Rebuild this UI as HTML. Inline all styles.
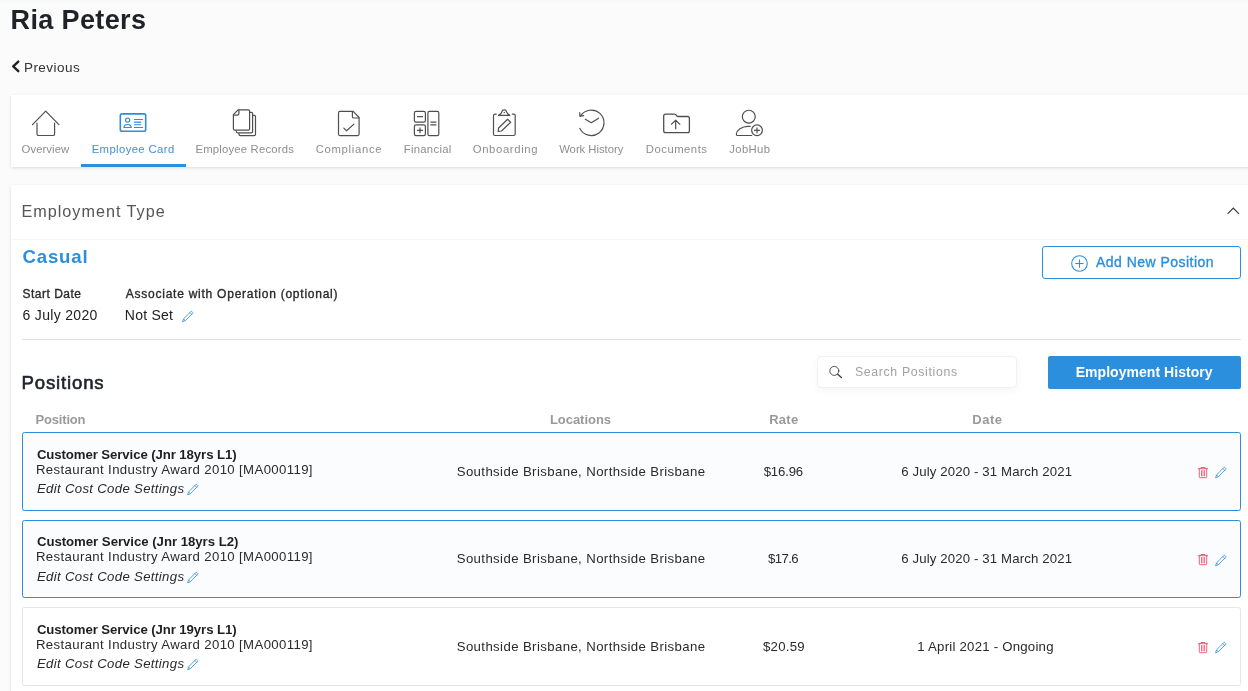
<!DOCTYPE html>
<html lang="en"><head><meta charset="utf-8"><title>Ria Peters - Employee Card</title>
<style>
*{box-sizing:border-box;margin:0;padding:0}
html,body{width:1248px;height:691px;overflow:hidden;background:#fbfbfb;font-family:"Liberation Sans", sans-serif;color:#222}
body{position:relative}
#app{position:absolute;left:0;top:0;width:1248px;height:691px;will-change:transform}
.t{position:absolute;white-space:nowrap;line-height:1;display:block}
.m{-webkit-text-stroke:0.35px currentColor}
.m2{-webkit-text-stroke:0.6px currentColor}
.topshade{position:absolute;left:0;top:0;width:1248px;height:4px;background:linear-gradient(#f6f7f7,#fbfbfb)}
.card{position:absolute;background:#fff;box-shadow:0 1px 3px rgba(0,0,0,.13)}
#tabs{left:11px;top:95px;width:1245px;height:72px}
#panel{left:11px;top:185px;width:1245px;height:520px}
.abs{position:absolute}
.uline{position:absolute;left:81px;top:164px;width:105px;height:3px;background:#2c8fdd}
.hr1{position:absolute;left:11px;top:239px;width:1237px;height:1px;background:#f6f6f6}
.hr2{position:absolute;left:22px;top:339px;width:1219px;height:1px;background:#dee2e4}
.btn-o{position:absolute;left:1042px;top:246px;width:199px;height:33px;border:1px solid #2c8fdd;border-radius:3px;background:#fff}
.btn-p{position:absolute;left:1048px;top:356px;width:193px;height:33px;border-radius:2px;background:#2c8fdd}
.search{position:absolute;left:817px;top:356px;width:200px;height:32px;border:1px solid #eff1f3;border-radius:4px;background:#fff;box-shadow:0 3px 8px rgba(0,0,0,.04)}
.row{position:absolute;left:22px;width:1219px;height:78px;border:1px solid #2c8fdd;border-radius:2.5px;background:#fafcfe}
.row.plain{border-color:#e6e6e6;background:#fff}
svg{position:absolute;overflow:visible}
.ic{fill:none;stroke:#4f4f4f;stroke-width:1.2;stroke-linecap:round;stroke-linejoin:round}
.icb{fill:none;stroke:#2c8fdd;stroke-width:1.3;stroke-linecap:round;stroke-linejoin:round}
</style></head>
<body>
<div id="app">
<div class="topshade"></div>
<header>
<span id="h1" class="t" style="font-size:27px;color:#1f2328;font-weight:700;left:10.50px;top:7.00px;letter-spacing:0.383px">Ria Peters</span>
<svg style="left:10px;top:59px" width="12" height="15" viewBox="10 59 12 15"><path d="M18.3 61.6 L13.2 66.4 L18.3 71.2" fill="none" stroke="#1f2328" stroke-width="2.4" stroke-linecap="round" stroke-linejoin="round"/></svg>
<span id="prev" class="t" style="font-size:13.5px;color:#333;left:23.90px;top:61.00px;letter-spacing:0.490px">Previous</span>
</header>
<nav>
<div id="tabs" class="card"></div>
<a class="tab"><svg style="left:30px;top:108px" width="32" height="30" viewBox="30 108 32 30"><g class="ic" stroke-linecap="butt"><path d="M32.5 124.7 L45.7 111.1 L58.9 124.7"/><path d="M37 123.2 V133.9 Q37 135.5 38.6 135.5 H53 Q54.6 135.5 54.6 133.9 V123.2"/></g></svg><span id="tb1" class="t" style="font-size:11.3px;color:#8e8e8e;left:21.60px;top:144.00px;letter-spacing:0.068px">Overview</span></a>
<a class="tab active"><svg style="left:117px;top:110px" width="32" height="26" viewBox="117 110 32 26"><g class="icb"><rect x="120.3" y="113.9" width="25.4" height="17.3" rx="1.8" stroke-width="1.6"/><circle cx="127.6" cy="120.1" r="2.1" stroke-width="1.2"/><path d="M123.9 127.5 C124.3 123.5 130.9 123.5 131.3 127.5 Z" stroke-width="1.1"/><path d="M134.4 119.5 H142.6 M134.4 122.1 H140.8 M134.4 124.8 H140.8 M134.4 127.5 H142.6" stroke-width="1.1"/></g></svg><span id="tb2" class="t" style="font-size:11.3px;color:#3b90df;left:91.70px;top:144.00px;letter-spacing:0.385px">Employee Card</span></a>
<a class="tab"><svg style="left:230px;top:107px" width="30" height="32" viewBox="230 107 30 32"><g class="ic"><path d="M233.4 114.6 L238.1 109.9 H248.3 Q249.6 109.9 249.6 111.2 V128.8 Q249.6 130.1 248.3 130.1 H234.7 Q233.4 130.1 233.4 128.8 Z"/><path d="M238.9 110.3 V113.6 Q238.9 115.2 237.3 115.2 H233.8"/><path d="M250 112.4 H251.3 Q252.6 112.4 252.6 113.7 V131.6 Q252.6 132.9 251.3 132.9 H237.6 Q236.3 132.9 236.2 131"/><path d="M253 115.3 H254.2 Q255.5 115.3 255.5 116.6 V134.3 Q255.5 135.6 254.2 135.6 H240.3 Q239 135.6 238.9 133.6"/></g></svg><span id="tb3" class="t" style="font-size:11.3px;color:#8e8e8e;left:195.50px;top:144.00px;letter-spacing:0.194px">Employee Records</span></a>
<a class="tab"><svg style="left:335px;top:108px" width="28" height="30" viewBox="335 108 28 30"><g class="ic"><path d="M353.2 111.4 H340 Q338.5 111.4 338.5 112.9 V134.1 Q338.5 135.6 340 135.6 H357.6 Q359.1 135.6 359.1 134.1 V117.5 Z"/><path d="M352.4 111.8 V116.4 Q352.4 118 354 118 H358.8"/><path d="M343.8 128.1 L346.6 130.8 L353.9 124.1"/></g></svg><span id="tb4" class="t" style="font-size:11.3px;color:#8e8e8e;left:315.70px;top:144.00px;letter-spacing:0.692px">Compliance</span></a>
<a class="tab"><svg style="left:411px;top:108px" width="31" height="30" viewBox="411 108 31 30"><g class="ic"><rect x="414.4" y="111.4" width="11" height="10.8" rx="1.6"/><rect x="414.4" y="124.8" width="11" height="10.8" rx="1.6"/><rect x="427.9" y="111.4" width="10.9" height="24.2" rx="1.6"/><path d="M417 116.6 H423 M417 130.4 H423 M420 127.4 V133.3 M430.4 122.2 H436.4 M430.4 124.8 H436.4" stroke-linecap="butt"/></g></svg><span id="tb5" class="t" style="font-size:11.3px;color:#8e8e8e;left:403.70px;top:144.00px;letter-spacing:0.300px">Financial</span></a>
<a class="tab"><svg style="left:490px;top:107px" width="29" height="31" viewBox="490 107 29 31"><g class="ic"><path d="M496.3 114.1 H495 Q493.5 114.1 493.5 115.6 V134 Q493.5 135.5 495 135.5 H513.7 Q515.2 135.5 515.2 134 V115.6 Q515.2 114.1 513.7 114.1 H512.3"/><path d="M498.6 115.3 H509.8 Q506.9 113.4 506.6 111.8 C506.2 109.2 502.2 109.2 501.8 111.8 Q501.5 113.4 498.6 115.3 Z"/><path d="M498.1 131.5 L498.6 128 L507.6 119.3 L510.7 122.2 L501.5 131 Z"/><circle cx="504.2" cy="112.5" r="0.35" stroke-width="0.7"/></g></svg><span id="tb6" class="t" style="font-size:11.3px;color:#8e8e8e;left:472.80px;top:144.00px;letter-spacing:0.627px">Onboarding</span></a>
<a class="tab"><svg style="left:576px;top:106px" width="32" height="33" viewBox="576 106 32 33"><g class="ic"><path d="M580.47 116.16 A12.7 12.7 0 1 1 579.9 128.4"/><path d="M579.7 112.3 L579.9 116.2 L584.1 115.6" stroke-linecap="butt"/><path d="M584.9 119.1 L591.3 122.7 L599 118" stroke-linecap="butt"/></g></svg><span id="tb7" class="t" style="font-size:11.3px;color:#8e8e8e;left:559.20px;top:144.00px;letter-spacing:-0.026px">Work History</span></a>
<a class="tab"><svg style="left:660px;top:110px" width="33" height="26" viewBox="660 110 33 26"><g class="ic"><path d="M663.7 116 Q663.7 114.1 665.6 114.1 H674.6 Q675.8 114.1 676.3 115.3 Q676.8 116.5 678 116.5 H687.5 Q689.4 116.5 689.4 118.4 V130.7 Q689.4 132.6 687.5 132.6 H665.6 Q663.7 132.6 663.7 130.7 Z" stroke-width="1.3"/><path d="M675.7 120.4 V129.3 M671.1 124.6 L675.7 120.2 L680.2 124.6" stroke-linecap="butt"/></g></svg><span id="tb8" class="t" style="font-size:11.3px;color:#8e8e8e;left:645.80px;top:144.00px;letter-spacing:0.502px">Documents</span></a>
<a class="tab"><svg style="left:733px;top:106px" width="33" height="33" viewBox="733 106 33 33"><g class="ic"><circle cx="748.8" cy="116.7" r="6.45"/><path d="M750.2 126.3 H748.2 C741.5 126.3 736.7 130.2 736.4 134 Q736.3 135.5 737.8 135.5 H751.7"/><circle cx="757" cy="130.3" r="5.35"/><path d="M754 130.3 H759.9 M757 127.4 V133.2" stroke-linecap="butt"/></g></svg><span id="tb9" class="t" style="font-size:11.3px;color:#8e8e8e;left:729.20px;top:144.00px;letter-spacing:0.389px">JobHub</span></a>
<div class="uline"></div>
</nav>
<main>
<div id="panel" class="card"></div>
<section class="emp-type">
<span id="et" class="t" style="font-size:16.2px;color:#555;left:21.50px;top:203.00px;letter-spacing:0.996px">Employment Type</span>
<svg style="left:1226px;top:206px" width="14" height="10" viewBox="1226 206 14 10"><path d="M1227.6 213.8 L1233.3 208.1 L1239 213.8" fill="none" stroke="#3a3a3a" stroke-width="1.2"/></svg>
<div class="hr1"></div>
<span id="cas" class="t" style="font-size:18.6px;color:#2c8fdd;font-weight:700;left:22.50px;top:248.00px;letter-spacing:0.838px">Casual</span>
<div class="btn-o"></div>
<svg style="left:1070.5px;top:254.8px" width="17" height="17" viewBox="0 0 17 17"><g fill="none" stroke="#2c8fdd" stroke-width="1.1" stroke-linecap="round"><circle cx="8.5" cy="8.5" r="7.8"/><path d="M8.5 4.8 V12.2 M4.8 8.5 H12.2"/></g></svg>
<span id="anp" class="t m" style="font-size:14px;color:#2c8fdd;left:1096.00px;top:255.00px;letter-spacing:0.472px">Add New Position</span>
<span id="sdl" class="t m" style="font-size:12px;color:#2a2a2a;left:22.50px;top:288.00px;letter-spacing:0.494px">Start Date</span>
<span id="sdv" class="t" style="font-size:14px;color:#222;left:22.50px;top:308.00px;letter-spacing:0.318px">6 July 2020</span>
<span id="aol" class="t m" style="font-size:12px;color:#2a2a2a;left:125.80px;top:288.00px;letter-spacing:0.753px">Associate with Operation (optional)</span>
<span id="aov" class="t" style="font-size:14px;color:#222;left:124.80px;top:308.00px;letter-spacing:0.233px">Not Set</span>
<svg style="left:181.9px;top:310.5px" width="12" height="12" viewBox="0 0 12 12"><g fill="none" stroke="#3a93e0" stroke-width="0.85" stroke-linecap="round" stroke-linejoin="round"><path d="M9.0 0.5 Q9.5 0.1 10 0.6 L10.7 1.3 Q11.1 1.8 10.7 2.3 L3.3 9.7 L0.5 10.8 L1.6 8 Z"/><path d="M8 1.6 L9.7 3.3"/><path d="M1.7 8.1 L3.2 9.6"/></g></svg>
</section>
<div class="hr2"></div>
<section class="positions">
<span id="pos" class="t m2" style="font-size:18.6px;color:#20242a;left:21.50px;top:374.00px;letter-spacing:0.831px">Positions</span>
<div class="search"></div>
<svg style="left:828px;top:364px" width="16" height="16" viewBox="828 364 16 16"><g fill="none" stroke="#3d3d3d" stroke-linecap="round"><circle cx="834.35" cy="370.9" r="4.5" stroke-width="0.9"/><path d="M837.7 374.3 L841.4 377.5" stroke-width="1.3"/></g></svg>
<span id="sp" class="t" style="font-size:12.3px;color:#a2a2a2;left:854.90px;top:366.00px;letter-spacing:0.658px">Search Positions</span>
<div class="btn-p"></div>
<span id="eh" class="t" style="font-size:14px;color:#fff;font-weight:700;left:1075.70px;top:365.00px;letter-spacing:0.044px">Employment History</span>
<span id="hp" class="t" style="font-size:13px;color:#9a9a9a;font-weight:700;left:35.60px;top:413.00px;letter-spacing:-0.191px">Position</span>
<span id="hl" class="t" style="font-size:13px;color:#9a9a9a;font-weight:700;left:549.90px;top:413.00px;letter-spacing:-0.033px">Locations</span>
<span id="hr" class="t" style="font-size:13px;color:#9a9a9a;font-weight:700;left:769.20px;top:413.00px;letter-spacing:0.284px">Rate</span>
<span id="hdt" class="t" style="font-size:13px;color:#9a9a9a;font-weight:700;left:972.30px;top:413.00px;letter-spacing:0.484px">Date</span>
<div class="position-item"><div class="row" style="top:432px;height:79px"></div><span id="r1a" class="t" style="font-size:13.2px;color:#1f1f1f;font-weight:700;left:36.90px;top:448.00px;letter-spacing:-0.087px">Customer Service (Jnr 18yrs L1)</span><span id="r1b" class="t" style="font-size:13.2px;color:#2a2a2a;left:35.90px;top:463.00px;letter-spacing:0.367px">Restaurant Industry Award 2010 [MA000119]</span><span id="r1c" class="t" style="font-size:13.2px;color:#2a2a2a;font-style:italic;left:36.90px;top:482.00px;letter-spacing:0.322px">Edit Cost Code Settings</span><svg style="left:187.3px;top:484.3px" width="12" height="12" viewBox="0 0 12 12"><g fill="none" stroke="#3a93e0" stroke-width="0.85" stroke-linecap="round" stroke-linejoin="round"><path d="M9.0 0.5 Q9.5 0.1 10 0.6 L10.7 1.3 Q11.1 1.8 10.7 2.3 L3.3 9.7 L0.5 10.8 L1.6 8 Z"/><path d="M8 1.6 L9.7 3.3"/><path d="M1.7 8.1 L3.2 9.6"/></g></svg><span id="r1d" class="t" style="font-size:13.2px;color:#2a2a2a;left:456.70px;top:465.00px;letter-spacing:0.392px">Southside Brisbane, Northside Brisbane</span><span id="r1e" class="t" style="font-size:13.2px;color:#2a2a2a;left:763.70px;top:465.00px;letter-spacing:-0.180px">$16.96</span><span id="r1f" class="t" style="font-size:13.2px;color:#2a2a2a;left:901.20px;top:465.00px;letter-spacing:0.142px">6 July 2020 - 31 March 2021</span><svg style="left:1198px;top:466.8px" width="10" height="11.2" viewBox="0 0 10 11.2"><g fill="none" stroke="#ef4560" stroke-width="0.85" stroke-linecap="round" stroke-linejoin="round"><path d="M0.3 1.7 H9.7"/><path d="M3 1.6 V0.5 H7 V1.6"/><path d="M1.3 1.9 V9.8 Q1.3 10.7 2.2 10.7 H7.8 Q8.7 10.7 8.7 9.8 V1.9"/><path d="M3.5 3.5 V9 M5 3.5 V9 M6.5 3.5 V9" stroke-width="0.75"/></g></svg><svg style="left:1215.0px;top:466.9px" width="12" height="12" viewBox="0 0 12 12"><g fill="none" stroke="#3a93e0" stroke-width="0.85" stroke-linecap="round" stroke-linejoin="round"><path d="M9.0 0.5 Q9.5 0.1 10 0.6 L10.7 1.3 Q11.1 1.8 10.7 2.3 L3.3 9.7 L0.5 10.8 L1.6 8 Z"/><path d="M8 1.6 L9.7 3.3"/><path d="M1.7 8.1 L3.2 9.6"/></g></svg></div>
<div class="position-item"><div class="row" style="top:520px;height:78px"></div><span id="r2a" class="t" style="font-size:13.2px;color:#1f1f1f;font-weight:700;left:36.90px;top:535.00px;letter-spacing:-0.027px">Customer Service (Jnr 18yrs L2)</span><span id="r2b" class="t" style="font-size:13.2px;color:#2a2a2a;left:35.90px;top:550.00px;letter-spacing:0.367px">Restaurant Industry Award 2010 [MA000119]</span><span id="r2c" class="t" style="font-size:13.2px;color:#2a2a2a;font-style:italic;left:36.90px;top:570.00px;letter-spacing:0.322px">Edit Cost Code Settings</span><svg style="left:187.3px;top:572.0px" width="12" height="12" viewBox="0 0 12 12"><g fill="none" stroke="#3a93e0" stroke-width="0.85" stroke-linecap="round" stroke-linejoin="round"><path d="M9.0 0.5 Q9.5 0.1 10 0.6 L10.7 1.3 Q11.1 1.8 10.7 2.3 L3.3 9.7 L0.5 10.8 L1.6 8 Z"/><path d="M8 1.6 L9.7 3.3"/><path d="M1.7 8.1 L3.2 9.6"/></g></svg><span id="r2d" class="t" style="font-size:13.2px;color:#2a2a2a;left:456.70px;top:552.00px;letter-spacing:0.392px">Southside Brisbane, Northside Brisbane</span><span id="r2e" class="t" style="font-size:13.2px;color:#2a2a2a;left:768.00px;top:552.00px;letter-spacing:-0.592px">$17.6</span><span id="r2f" class="t" style="font-size:13.2px;color:#2a2a2a;left:901.20px;top:552.00px;letter-spacing:0.142px">6 July 2020 - 31 March 2021</span><svg style="left:1198px;top:554.4px" width="10" height="11.2" viewBox="0 0 10 11.2"><g fill="none" stroke="#ef4560" stroke-width="0.85" stroke-linecap="round" stroke-linejoin="round"><path d="M0.3 1.7 H9.7"/><path d="M3 1.6 V0.5 H7 V1.6"/><path d="M1.3 1.9 V9.8 Q1.3 10.7 2.2 10.7 H7.8 Q8.7 10.7 8.7 9.8 V1.9"/><path d="M3.5 3.5 V9 M5 3.5 V9 M6.5 3.5 V9" stroke-width="0.75"/></g></svg><svg style="left:1215.0px;top:554.5px" width="12" height="12" viewBox="0 0 12 12"><g fill="none" stroke="#3a93e0" stroke-width="0.85" stroke-linecap="round" stroke-linejoin="round"><path d="M9.0 0.5 Q9.5 0.1 10 0.6 L10.7 1.3 Q11.1 1.8 10.7 2.3 L3.3 9.7 L0.5 10.8 L1.6 8 Z"/><path d="M8 1.6 L9.7 3.3"/><path d="M1.7 8.1 L3.2 9.6"/></g></svg></div>
<div class="position-item"><div class="row plain" style="top:607px;height:79px"></div><span id="r3a" class="t" style="font-size:13.2px;color:#1f1f1f;font-weight:700;left:36.90px;top:623.00px;letter-spacing:-0.087px">Customer Service (Jnr 19yrs L1)</span><span id="r3b" class="t" style="font-size:13.2px;color:#2a2a2a;left:35.90px;top:638.00px;letter-spacing:0.367px">Restaurant Industry Award 2010 [MA000119]</span><span id="r3c" class="t" style="font-size:13.2px;color:#2a2a2a;font-style:italic;left:36.90px;top:657.00px;letter-spacing:0.322px">Edit Cost Code Settings</span><svg style="left:187.3px;top:659.3px" width="12" height="12" viewBox="0 0 12 12"><g fill="none" stroke="#3a93e0" stroke-width="0.85" stroke-linecap="round" stroke-linejoin="round"><path d="M9.0 0.5 Q9.5 0.1 10 0.6 L10.7 1.3 Q11.1 1.8 10.7 2.3 L3.3 9.7 L0.5 10.8 L1.6 8 Z"/><path d="M8 1.6 L9.7 3.3"/><path d="M1.7 8.1 L3.2 9.6"/></g></svg><span id="r3d" class="t" style="font-size:13.2px;color:#2a2a2a;left:456.70px;top:640.00px;letter-spacing:0.392px">Southside Brisbane, Northside Brisbane</span><span id="r3e" class="t" style="font-size:13.2px;color:#2a2a2a;left:763.00px;top:640.00px;letter-spacing:0.240px">$20.59</span><span id="r3f" class="t" style="font-size:13.2px;color:#2a2a2a;left:917.30px;top:640.00px;letter-spacing:0.237px">1 April 2021 - Ongoing</span><svg style="left:1198px;top:641.8px" width="10" height="11.2" viewBox="0 0 10 11.2"><g fill="none" stroke="#ef4560" stroke-width="0.85" stroke-linecap="round" stroke-linejoin="round"><path d="M0.3 1.7 H9.7"/><path d="M3 1.6 V0.5 H7 V1.6"/><path d="M1.3 1.9 V9.8 Q1.3 10.7 2.2 10.7 H7.8 Q8.7 10.7 8.7 9.8 V1.9"/><path d="M3.5 3.5 V9 M5 3.5 V9 M6.5 3.5 V9" stroke-width="0.75"/></g></svg><svg style="left:1215.0px;top:641.9px" width="12" height="12" viewBox="0 0 12 12"><g fill="none" stroke="#3a93e0" stroke-width="0.85" stroke-linecap="round" stroke-linejoin="round"><path d="M9.0 0.5 Q9.5 0.1 10 0.6 L10.7 1.3 Q11.1 1.8 10.7 2.3 L3.3 9.7 L0.5 10.8 L1.6 8 Z"/><path d="M8 1.6 L9.7 3.3"/><path d="M1.7 8.1 L3.2 9.6"/></g></svg></div>

</section>
</main>
</div>
</body></html>
